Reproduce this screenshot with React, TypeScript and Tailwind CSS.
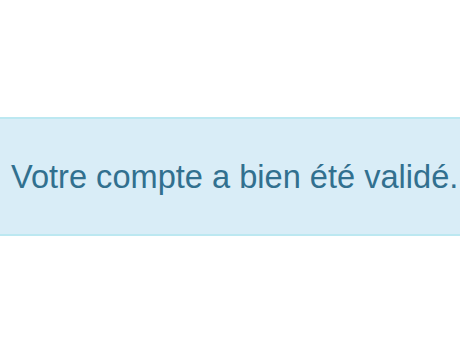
import React from "react";

const App = () => {
  return (
    <div className="w-[460px] h-[344px] bg-white overflow-hidden pt-[117px]">
      <div className="h-[119px] flex items-center bg-[#d9edf7] border-y-2 border-[#bce8f1] pl-[11px]">
        <p
          className="whitespace-nowrap text-[32.6px] leading-none text-[#31708f] pt-[2px]"
          style={{ fontFamily: '"Liberation Sans", Arial, sans-serif' }}
        >
          Votre compte a bien été validé.
        </p>
      </div>
    </div>
  );
};

export default App;
